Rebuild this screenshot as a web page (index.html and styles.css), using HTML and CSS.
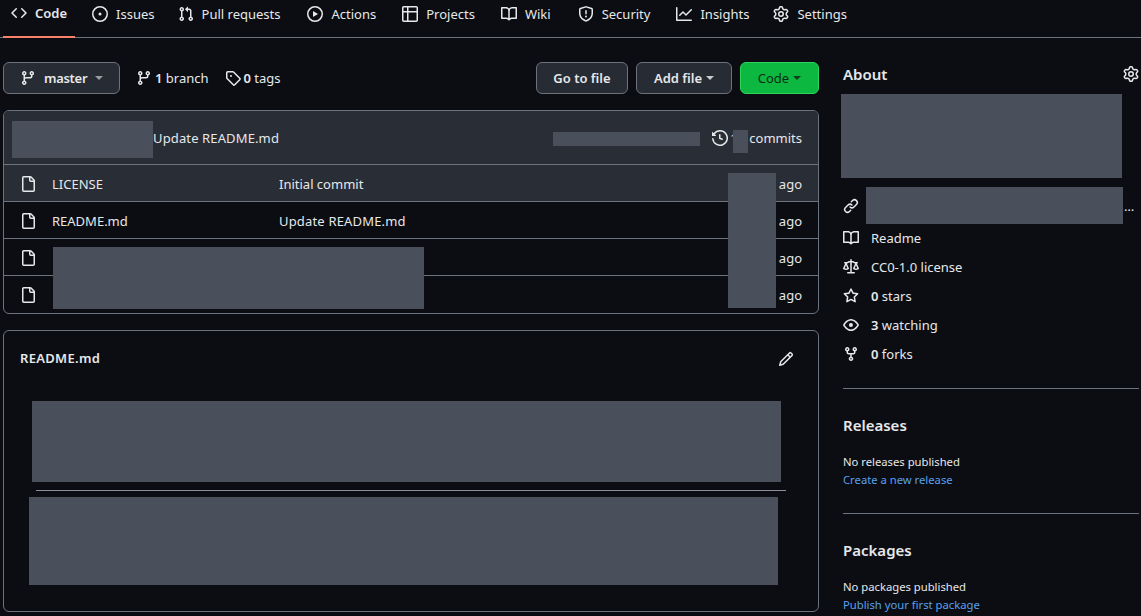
FILE: index.html
```html
<!DOCTYPE html>
<html lang="en">
<head>
<meta charset="utf-8">
<title>Repository</title>
<link rel="stylesheet" href="styles.css">
</head>
<body>
<svg class="sprite" width="0" height="0" aria-hidden="true">
<defs>
<symbol id="i-code" viewBox="0 0 16 16"><path d="M4.72 3.22a.75.75 0 0 1 1.06 1.06L2.06 8l3.72 3.72a.75.75 0 1 1-1.06 1.06L.47 8.53a.75.75 0 0 1 0-1.06Zm6.56 0a.75.75 0 1 0-1.06 1.06L13.94 8l-3.72 3.72a.75.75 0 1 0 1.06 1.06l4.25-4.25a.75.75 0 0 0 0-1.06Z"/></symbol>
<symbol id="i-issue" viewBox="0 0 16 16"><path d="M8 9.5a1.5 1.5 0 1 0 0-3 1.5 1.5 0 0 0 0 3Z"/><path d="M8 0a8 8 0 1 1 0 16A8 8 0 0 1 8 0ZM1.5 8a6.5 6.5 0 1 0 13 0 6.5 6.5 0 0 0-13 0Z"/></symbol>
<symbol id="i-pr" viewBox="0 0 16 16"><path d="M1.5 3.25a2.25 2.25 0 1 1 3 2.122v5.256a2.251 2.251 0 1 1-1.5 0V5.372A2.25 2.25 0 0 1 1.5 3.25Zm5.677-.177L9.573.677A.25.25 0 0 1 10 .854V2.5h1A2.5 2.5 0 0 1 13.5 5v5.628a2.251 2.251 0 1 1-1.5 0V5a1 1 0 0 0-1-1h-1v1.646a.25.25 0 0 1-.427.177L7.177 3.427a.25.25 0 0 1 0-.354ZM3.75 2.5a.75.75 0 1 0 0 1.5.75.75 0 0 0 0-1.5Zm0 9.5a.75.75 0 1 0 0 1.5.75.75 0 0 0 0-1.5Zm8.25.75a.75.75 0 1 0 1.5 0 .75.75 0 0 0-1.5 0Z"/></symbol>
<symbol id="i-play" viewBox="0 0 16 16"><path d="M8 0a8 8 0 1 1 0 16A8 8 0 0 1 8 0ZM1.5 8a6.5 6.5 0 1 0 13 0 6.5 6.5 0 0 0-13 0Zm4.879-2.773 4.264 2.559a.25.25 0 0 1 0 .428l-4.264 2.559A.25.25 0 0 1 6 10.559V5.442a.25.25 0 0 1 .379-.215Z"/></symbol>
<symbol id="i-table" viewBox="0 0 16 16"><path d="M0 1.75C0 .784.784 0 1.75 0h12.5C15.216 0 16 .784 16 1.75v12.5A1.75 1.75 0 0 1 14.25 16H1.75A1.75 1.75 0 0 1 0 14.25ZM6.5 6.5v8h7.75a.25.25 0 0 0 .25-.25V6.5Zm8-1.5V1.75a.25.25 0 0 0-.25-.25H6.5V5Zm-13 1.5v7.75c0 .138.112.25.25.25H5v-8ZM5 5V1.5H1.75a.25.25 0 0 0-.25.25V5Z"/></symbol>
<symbol id="i-book" viewBox="0 0 16 16"><path d="M0 1.75A.75.75 0 0 1 .75 1h4.253c1.227 0 2.317.59 3 1.501A3.743 3.743 0 0 1 11.006 1h4.245a.75.75 0 0 1 .75.75v10.5a.75.75 0 0 1-.75.75h-4.507a2.25 2.25 0 0 0-1.591.659l-.622.621a.75.75 0 0 1-1.06 0l-.622-.621A2.25 2.25 0 0 0 5.258 13H.75a.75.75 0 0 1-.75-.75Zm7.251 10.324.004-5.073-.002-2.253A2.25 2.25 0 0 0 5.003 2.5H1.5v9h3.757a3.75 3.75 0 0 1 1.994.574ZM8.755 4.75l-.004 7.322a3.752 3.752 0 0 1 1.992-.572H14.5v-9h-3.495a2.25 2.25 0 0 0-2.25 2.25Z"/></symbol>
<symbol id="i-shield" viewBox="0 0 16 16"><path d="M7.467.133a1.748 1.748 0 0 1 1.066 0l5.25 1.68A1.75 1.75 0 0 1 15 3.48V7c0 1.566-.32 3.182-1.303 4.682-.983 1.498-2.585 2.813-5.032 3.855a1.697 1.697 0 0 1-1.33 0c-2.447-1.042-4.049-2.357-5.032-3.855C1.32 10.182 1 8.566 1 7V3.48a1.75 1.75 0 0 1 1.217-1.667Zm.61 1.429a.25.25 0 0 0-.153 0l-5.25 1.68a.25.25 0 0 0-.174.238V7c0 1.358.275 2.666 1.057 3.86.784 1.194 2.121 2.34 4.366 3.297a.196.196 0 0 0 .154 0c2.245-.956 3.582-2.104 4.366-3.298C13.225 9.666 13.5 8.36 13.5 7V3.48a.251.251 0 0 0-.174-.237l-5.25-1.68ZM8.75 4.75v3a.75.75 0 0 1-1.5 0v-3a.75.75 0 0 1 1.5 0ZM9 10.5a1 1 0 1 1-2 0 1 1 0 0 1 2 0Z"/></symbol>
<symbol id="i-graph" viewBox="0 0 16 16"><path d="M1.5 1.75V13.5h13.75a.75.75 0 0 1 0 1.5H.75a.75.75 0 0 1-.75-.75V1.75a.75.75 0 0 1 1.5 0Zm14.28 2.53-5.25 5.25a.75.75 0 0 1-1.06 0L7 7.06 4.28 9.78a.751.751 0 0 1-1.042-.018.751.751 0 0 1-.018-1.042l3.25-3.25a.75.75 0 0 1 1.06 0L10 7.94l4.72-4.72a.751.751 0 0 1 1.042.018.751.751 0 0 1 .018 1.042Z"/></symbol>
<symbol id="i-gear" viewBox="0 0 16 16"><path d="M8 0a8.2 8.2 0 0 1 .701.031C9.444.095 9.99.645 10.16 1.29l.288 1.107c.018.066.079.158.212.224.231.114.454.243.668.386.123.082.233.09.299.071l1.103-.303c.644-.176 1.392.021 1.82.63.27.385.506.792.704 1.218.315.675.111 1.422-.364 1.891l-.814.806c-.049.048-.098.147-.088.294.016.257.016.515 0 .772-.01.147.038.246.088.294l.814.806c.475.469.679 1.216.364 1.891a7.977 7.977 0 0 1-.704 1.217c-.428.61-1.176.807-1.82.63l-1.102-.302c-.067-.019-.177-.011-.3.071a5.909 5.909 0 0 1-.668.386c-.133.066-.194.158-.211.224l-.29 1.106c-.168.646-.715 1.196-1.458 1.26a8.006 8.006 0 0 1-1.402 0c-.743-.064-1.289-.614-1.458-1.26l-.289-1.106c-.018-.066-.079-.158-.212-.224a5.738 5.738 0 0 1-.668-.386c-.123-.082-.233-.09-.299-.071l-1.103.303c-.644.176-1.392-.021-1.82-.63a8.12 8.12 0 0 1-.704-1.218c-.315-.675-.111-1.422.363-1.891l.815-.806c.05-.048.098-.147.088-.294a6.214 6.214 0 0 1 0-.772c.01-.147-.038-.246-.088-.294l-.815-.806C.635 6.045.431 5.298.746 4.623a7.92 7.92 0 0 1 .704-1.217c.428-.61 1.176-.807 1.82-.63l1.102.302c.067.019.177.011.3-.071.214-.143.437-.272.668-.386.133-.066.194-.158.211-.224l.29-1.106C6.009.645 6.556.095 7.299.03 7.53.01 7.764 0 8 0Zm-.571 1.525c-.036.003-.108.036-.137.146l-.289 1.105c-.147.561-.549.967-.998 1.189-.173.086-.34.183-.5.29-.417.278-.97.423-1.529.27l-1.103-.303c-.109-.03-.175.016-.195.045-.22.312-.412.644-.573.99-.014.031-.021.11.059.19l.815.806c.411.406.562.957.53 1.456a4.709 4.709 0 0 0 0 .582c.032.499-.119 1.05-.53 1.456l-.815.806c-.081.08-.073.159-.059.19.162.346.353.677.573.989.02.03.085.076.195.046l1.102-.303c.56-.153 1.113-.008 1.53.27.161.107.328.204.501.29.447.222.85.629.997 1.189l.289 1.105c.029.109.101.143.137.146a6.6 6.6 0 0 0 1.142 0c.036-.003.108-.036.137-.146l.289-1.105c.147-.561.549-.967.998-1.189.173-.086.34-.183.5-.29.417-.278.97-.423 1.529-.27l1.103.303c.109.029.175-.016.195-.045.22-.313.411-.644.573-.99.014-.031.021-.11-.059-.19l-.815-.806c-.411-.406-.562-.957-.53-1.456a4.709 4.709 0 0 0 0-.582c-.032-.499.119-1.05.53-1.456l.815-.806c.081-.08.073-.159.059-.19a6.464 6.464 0 0 0-.573-.989c-.02-.03-.085-.076-.195-.046l-1.102.303c-.56.153-1.113.008-1.53-.27a4.44 4.44 0 0 0-.501-.29c-.447-.222-.85-.629-.997-1.189l-.289-1.105c-.029-.11-.101-.143-.137-.146a6.6 6.6 0 0 0-1.142 0ZM11 8a3 3 0 1 1-6 0 3 3 0 0 1 6 0ZM9.5 8a1.5 1.5 0 1 0-3.001.001A1.5 1.5 0 0 0 9.5 8Z"/></symbol>
<symbol id="i-branch" viewBox="0 0 16 16"><path d="M9.5 3.25a2.25 2.25 0 1 1 3 2.122V6A2.5 2.5 0 0 1 10 8.5H6a1 1 0 0 0-1 1v1.128a2.251 2.251 0 1 1-1.5 0V5.372a2.25 2.25 0 1 1 1.5 0v1.836A2.493 2.493 0 0 1 6 7h4a1 1 0 0 0 1-1v-.628A2.25 2.25 0 0 1 9.5 3.25Zm-6 0a.75.75 0 1 0 1.5 0 .75.75 0 0 0-1.5 0Zm8.25-.75a.75.75 0 1 0 0 1.5.75.75 0 0 0 0-1.5ZM4.25 12a.75.75 0 1 0 0 1.5.75.75 0 0 0 0-1.5Z"/></symbol>
<symbol id="i-tag" viewBox="0 0 16 16"><path d="M1 7.775V2.75C1 1.784 1.784 1 2.75 1h5.025c.464 0 .91.184 1.238.513l6.25 6.25a1.75 1.75 0 0 1 0 2.474l-5.026 5.026a1.75 1.75 0 0 1-2.474 0l-6.25-6.25A1.752 1.752 0 0 1 1 7.775Zm1.5 0c0 .066.026.13.073.177l6.25 6.25a.25.25 0 0 0 .354 0l5.025-5.025a.25.25 0 0 0 0-.354l-6.25-6.25a.25.25 0 0 0-.177-.073H2.75a.25.25 0 0 0-.25.25ZM6 5a1 1 0 1 1 0 2 1 1 0 0 1 0-2Z"/></symbol>
<symbol id="i-history" viewBox="0 0 16 16"><path d="m.427 1.927 1.215 1.215a8.002 8.002 0 1 1-1.6 5.685.75.75 0 1 1 1.493-.154 6.5 6.5 0 1 0 1.18-4.458l1.358 1.358A.25.25 0 0 1 3.896 6H.25A.25.25 0 0 1 0 5.75V2.104a.25.25 0 0 1 .427-.177ZM7.75 4a.75.75 0 0 1 .75.75v2.992l2.028.812a.75.75 0 0 1-.557 1.392l-2.5-1A.751.751 0 0 1 7 8.25v-3.5A.75.75 0 0 1 7.75 4Z"/></symbol>
<symbol id="i-file" viewBox="0 0 16 16"><path d="M2 1.75C2 .784 2.784 0 3.75 0h6.586c.464 0 .909.184 1.237.513l2.914 2.914c.329.328.513.773.513 1.237v9.586A1.75 1.75 0 0 1 13.25 16h-9.5A1.75 1.75 0 0 1 2 14.25Zm1.75-.25a.25.25 0 0 0-.25.25v12.5c0 .138.112.25.25.25h9.5a.25.25 0 0 0 .25-.25V6h-2.75A1.75 1.75 0 0 1 9 4.25V1.5Zm6.75.062V4.25c0 .138.112.25.25.25h2.688l-.011-.013-2.914-2.914-.013-.011Z"/></symbol>
<symbol id="i-link" viewBox="0 0 16 16"><path d="m7.775 3.275 1.25-1.25a3.5 3.5 0 1 1 4.95 4.95l-2.5 2.5a3.5 3.5 0 0 1-4.95 0 .751.751 0 0 1 .018-1.042.751.751 0 0 1 1.042-.018 1.998 1.998 0 0 0 2.83 0l2.5-2.5a2.002 2.002 0 0 0-2.83-2.83l-1.25 1.25a.751.751 0 0 1-1.042-.018.751.751 0 0 1-.018-1.042Zm-4.69 9.64a1.998 1.998 0 0 0 2.83 0l1.25-1.25a.751.751 0 0 1 1.042.018.751.751 0 0 1 .018 1.042l-1.25 1.25a3.5 3.5 0 1 1-4.95-4.95l2.5-2.5a3.5 3.5 0 0 1 4.95 0 .751.751 0 0 1-.018 1.042.751.751 0 0 1-1.042.018 1.998 1.998 0 0 0-2.83 0l-2.5 2.5a1.998 1.998 0 0 0 0 2.83Z"/></symbol>
<symbol id="i-law" viewBox="0 0 16 16"><path d="M8.75.75V2h.985c.304 0 .603.08.867.231l1.29.736c.038.022.08.033.124.033h2.234a.75.75 0 0 1 0 1.5h-.427l2.111 4.692a.75.75 0 0 1-.154.838l-.53-.53.529.531-.001.002-.002.002-.006.006-.006.005-.01.01-.045.04c-.21.176-.441.327-.686.45C14.556 10.78 13.88 11 13 11a4.498 4.498 0 0 1-2.023-.454 3.544 3.544 0 0 1-.686-.45l-.045-.04-.016-.015-.006-.006-.004-.004v-.001a.75.75 0 0 1-.154-.838L12.178 4.5h-.162c-.305 0-.604-.079-.868-.231l-1.29-.736a.245.245 0 0 0-.124-.033H8.75V13h2.5a.75.75 0 0 1 0 1.5h-6.5a.75.75 0 0 1 0-1.5h2.5V3.5h-.984a.245.245 0 0 0-.124.033l-1.289.737c-.265.15-.564.23-.869.23h-.162l2.112 4.692a.75.75 0 0 1-.154.838l-.53-.53.529.531-.001.002-.002.002-.006.006-.016.015-.045.04c-.21.176-.441.327-.686.45C4.556 10.78 3.88 11 3 11a4.498 4.498 0 0 1-2.023-.454 3.544 3.544 0 0 1-.686-.45l-.045-.04-.016-.015-.006-.006-.004-.004v-.001a.75.75 0 0 1-.154-.838L2.178 4.5H1.75a.75.75 0 0 1 0-1.5h2.234a.249.249 0 0 0 .125-.033l1.288-.737c.265-.15.564-.23.869-.23h.984V.75a.75.75 0 0 1 1.5 0Zm2.945 8.477c.285.135.718.273 1.305.273s1.02-.138 1.305-.273L13 6.327Zm-10 0c.285.135.718.273 1.305.273s1.02-.138 1.305-.273L3 6.327Z"/></symbol>
<symbol id="i-star" viewBox="0 0 16 16"><path d="M8 .25a.75.75 0 0 1 .673.418l1.882 3.815 4.21.612a.75.75 0 0 1 .416 1.279l-3.046 2.97.719 4.192a.751.751 0 0 1-1.088.791L8 12.347l-3.766 1.98a.75.75 0 0 1-1.088-.79l.72-4.194L.818 6.374a.75.75 0 0 1 .416-1.28l4.21-.611L7.327.668A.75.75 0 0 1 8 .25Zm0 2.445L6.615 5.5a.75.75 0 0 1-.564.41l-3.097.45 2.24 2.184a.75.75 0 0 1 .216.664l-.528 3.084 2.769-1.456a.75.75 0 0 1 .698 0l2.77 1.456-.53-3.084a.75.75 0 0 1 .216-.664l2.24-2.183-3.096-.45a.75.75 0 0 1-.564-.41L8 2.694Z"/></symbol>
<symbol id="i-eye" viewBox="0 0 16 16"><path d="M8 2c1.981 0 3.671.992 4.933 2.078 1.27 1.091 2.187 2.345 2.637 3.023a1.62 1.62 0 0 1 0 1.798c-.45.678-1.367 1.932-2.637 3.023C11.67 13.008 9.981 14 8 14c-1.981 0-3.671-.992-4.933-2.078C1.797 10.83.88 9.576.43 8.898a1.62 1.62 0 0 1 0-1.798c.45-.677 1.367-1.931 2.637-3.022C4.33 2.992 6.019 2 8 2ZM1.679 7.932a.12.12 0 0 0 0 .136c.411.622 1.241 1.75 2.366 2.717C5.176 11.758 6.527 12.5 8 12.5c1.473 0 2.825-.742 3.955-1.715 1.124-.967 1.954-2.096 2.366-2.717a.12.12 0 0 0 0-.136c-.412-.621-1.242-1.75-2.366-2.717C10.824 4.242 9.473 3.5 8 3.5c-1.473 0-2.825.742-3.955 1.715-1.124.967-1.954 2.096-2.366 2.717ZM8 10a2 2 0 1 1-.001-3.999A2 2 0 0 1 8 10Z"/></symbol>
<symbol id="i-fork" viewBox="0 0 16 16"><path d="M5 5.372v.878c0 .414.336.75.75.75h4.5a.75.75 0 0 0 .75-.75v-.878a2.25 2.25 0 1 1 1.5 0v.878a2.25 2.25 0 0 1-2.25 2.25h-1.5v2.128a2.251 2.251 0 1 1-1.5 0V8.5h-1.5A2.25 2.25 0 0 1 3.5 6.25v-.878a2.25 2.25 0 1 1 1.5 0ZM5 3.25a.75.75 0 1 0-1.5 0 .75.75 0 0 0 1.5 0Zm6.75.75a.75.75 0 1 0 0-1.5.75.75 0 0 0 0 1.5Zm-3 8.75a.75.75 0 1 0-1.5 0 .75.75 0 0 0 1.5 0Z"/></symbol>
<symbol id="i-pencil" viewBox="0 0 16 16"><path d="M11.013 1.427a1.75 1.75 0 0 1 2.474 0l1.086 1.086a1.75 1.75 0 0 1 0 2.474l-8.61 8.61c-.21.21-.47.364-.756.445l-3.251.93a.75.75 0 0 1-.927-.928l.929-3.25c.081-.286.235-.547.445-.758l8.61-8.61Zm.176 4.823L9.75 4.81l-6.286 6.287a.253.253 0 0 0-.064.108l-.558 1.953 1.953-.558a.253.253 0 0 0 .108-.064Zm1.238-3.763a.25.25 0 0 0-.354 0L10.811 3.75l1.439 1.44 1.263-1.263a.25.25 0 0 0 0-.354Z"/></symbol>
</defs>
</svg>

<nav class="tabs">
  <a class="tab tab-active"><svg class="icon"><use href="#i-code"/></svg>Code</a>
  <a class="tab"><svg class="icon"><use href="#i-issue"/></svg>Issues</a>
  <a class="tab"><svg class="icon"><use href="#i-pr"/></svg>Pull requests</a>
  <a class="tab"><svg class="icon"><use href="#i-play"/></svg>Actions</a>
  <a class="tab"><svg class="icon"><use href="#i-table"/></svg>Projects</a>
  <a class="tab"><svg class="icon"><use href="#i-book"/></svg>Wiki</a>
  <a class="tab"><svg class="icon"><use href="#i-shield"/></svg>Security</a>
  <a class="tab"><svg class="icon"><use href="#i-graph"/></svg>Insights</a>
  <a class="tab"><svg class="icon"><use href="#i-gear"/></svg>Settings</a>
</nav>

<main class="layout">
  <section class="content">
    <div class="toolbar">
      <button class="btn btn-branch"><svg class="icon"><use href="#i-branch"/></svg><b>master</b><span class="caret caret-dim"></span></button>
      <a class="meta-link"><svg class="icon"><use href="#i-branch"/></svg><span><b>1</b> branch</span></a>
      <a class="meta-link"><svg class="icon"><use href="#i-tag"/></svg><span><b>0</b> tags</span></a>
      <div class="spacer"></div>
      <button class="btn btn-goto">Go to file</button>
      <button class="btn btn-add">Add file<span class="caret"></span></button>
      <button class="btn btn-green">Code<span class="caret"></span></button>
    </div>

    <div class="files">
      <div class="commit-bar">
        <span class="commit-msg">Update README.md</span>
        <a class="commits"><svg class="icon"><use href="#i-history"/></svg><span class="commits-num">1</span><span class="commits-word">commits</span></a>
      </div>
      <div class="row row-hover"><svg class="icon"><use href="#i-file"/></svg><span class="name">LICENSE</span><span class="msg">Initial commit</span><span class="age">ago</span></div>
      <div class="row"><svg class="icon"><use href="#i-file"/></svg><span class="name">README.md</span><span class="msg msg-wide">Update README.md</span><span class="age">ago</span></div>
      <div class="row"><svg class="icon"><use href="#i-file"/></svg><span class="name"></span><span class="msg"></span><span class="age">ago</span></div>
      <div class="row row-last"><svg class="icon"><use href="#i-file"/></svg><span class="name"></span><span class="msg"></span><span class="age">ago</span></div>
      <div class="mask mask-author"></div>
      <div class="mask mask-sha"></div>
      <div class="mask mask-count"></div>
      <div class="mask mask-ages"></div>
      <div class="mask mask-names"></div>
    </div>

    <article class="readme">
      <header class="readme-head"><strong>README.md</strong><svg class="icon"><use href="#i-pencil"/></svg></header>
      <div class="block block-title"></div>
      <hr class="rule">
      <div class="block block-body"></div>
    </article>
  </section>

  <aside class="side">
    <section class="about">
      <div class="side-head"><h2>About</h2><svg class="icon"><use href="#i-gear"/></svg></div>
      <div class="block about-desc"></div>
      <div class="about-link"><svg class="icon"><use href="#i-link"/></svg><div class="block about-url"></div><span class="dots">…</span></div>
      <ul class="facts">
        <li><svg class="icon"><use href="#i-book"/></svg>Readme</li>
        <li><svg class="icon"><use href="#i-law"/></svg>CC0-1.0 license</li>
        <li><svg class="icon"><use href="#i-star"/></svg><span><b>0</b> stars</span></li>
        <li><svg class="icon"><use href="#i-eye"/></svg><span><b>3</b> watching</span></li>
        <li><svg class="icon"><use href="#i-fork"/></svg><span><b>0</b> forks</span></li>
      </ul>
    </section>
    <section class="panel">
      <h2>Releases</h2>
      <p>No releases published</p>
      <a class="link">Create a new release</a>
    </section>
    <section class="panel">
      <h2>Packages</h2>
      <p>No packages published</p>
      <a class="link">Publish your first package</a>
    </section>
  </aside>
</main>
</body>
</html>
```

FILE: styles.css
```css
* { box-sizing: border-box; }
html, body { height: 100%; }
body {
  margin: 0;
  overflow: hidden;
  background: #0b0d12;
  color: #e6e8ea;
  font-family: "Noto Sans", "Open Sans", sans-serif;
  font-size: 13px;
  line-height: 18px;
}
.sprite { position: absolute; }
.icon { width: 16px; height: 16px; fill: currentColor; flex: none; display: block; }
b, strong { font-weight: 600; }
h2 { margin: 0; font-size: 15px; font-weight: 600; line-height: 20px; }
p { margin: 0; }
ul { margin: 0; padding: 0; list-style: none; }

.tabs {
  height: 38px;
  display: flex;
  gap: 9px;
  padding-left: 3px;
  border-bottom: 1px solid #6d737d;
}
.tab {
  height: 38px;
  padding: 0 8px 10px;
  display: flex;
  align-items: center;
  gap: 8px;
  white-space: nowrap;
}
.tab:nth-child(3) { margin-left: -2px; }
.tab:nth-child(4) { margin-left: 2px; }
.tab:nth-child(5) { margin-left: 1px; }
.tab:nth-child(6) { margin-left: 1px; }
.tab:nth-child(7) { margin-left: 2px; }
.tab:nth-child(8) { margin-left: 1px; }
.tab:nth-child(9) { margin-left: -1px; }
.tab-active { font-weight: 600; border-bottom: 2px solid #f78166; }

.layout {
  display: grid;
  grid-template-columns: 816px 296px;
  gap: 24px;
  padding: 24px 0 0 3px;
}

.toolbar { display: flex; align-items: center; height: 32px; margin-bottom: 16px; }
.spacer { flex: 1; }
.btn {
  height: 32px;
  display: flex;
  align-items: center;
  justify-content: center;
  background: #272b33;
  color: #e6e8ea;
  border: 1px solid #6d737d;
  border-radius: 6px;
  font: 600 13px/18px "Noto Sans", "Open Sans", sans-serif;
  padding: 0;
}
.btn-branch { width: 117px; gap: 8px; font-weight: 400; justify-content: flex-start; padding-left: 16px; }
.btn-branch b { letter-spacing: -.3px; }
.btn-goto { width: 92px; margin-right: 8px; }
.btn-add { width: 96px; margin-right: 8px; gap: 4px; }
.btn-green { width: 79px; gap: 4px; background: #0cb83f; border-color: #2dd45e; color: #0c2a18; font-weight: 400; }
.caret { width: 0; height: 0; border: 4px solid transparent; border-top-color: currentColor; border-bottom-width: 0; opacity: .85; }
.caret-dim { opacity: .6; }
.meta-link { display: flex; align-items: center; gap: 3px; margin-left: 16px; white-space: nowrap; }

.files {
  position: relative;
  border: 1px solid #6d737d;
  border-radius: 6px;
  overflow: hidden;
  margin-bottom: 16px;
}
.commit-bar {
  height: 53px;
  display: flex;
  align-items: center;
  padding: 0 16px 0 149px;
  background: #292d36;
}
.commit-msg { flex: 1; letter-spacing: .13px; }
.commits { display: flex; align-items: center; gap: 4px; }
.commits-num { margin-left: -2px; }
.commits-word { margin-left: 7.5px; }
.row {
  height: 37px;
  display: flex;
  align-items: center;
  padding: 1px 16px 0;
  border-top: 1px solid #6d737d;
  color: #e6e8ea;
}
.row-last { height: 38px; }
.row-hover { background: #292d36; }
.name { width: 227px; margin-left: 16px; flex: none; }
.msg { flex: 1; }
.msg-wide { letter-spacing: .17px; }

.mask { position: absolute; background: #4a505b; }
.mask-author { left: 8px; top: 10px; width: 141px; height: 37px; }
.mask-sha { left: 549px; top: 21px; width: 147px; height: 14px; }
.mask-count { left: 729px; top: 19px; width: 15px; height: 23px; }
.mask-ages { left: 724px; top: 62px; width: 48px; height: 135px; }
.mask-names { left: 49px; top: 136px; width: 371px; height: 62px; }

.readme {
  height: 282px;
  border: 1px solid #6d737d;
  border-radius: 6px;
}
.readme-head {
  height: 54px;
  display: flex;
  align-items: center;
  justify-content: space-between;
  padding: 0 24px 0 16px;
}
.readme-head strong { letter-spacing: .3px; }
.readme-head .icon { margin-top: 2px; }
.block { background: #4a505b; }
.block-title { width: 749px; height: 81px; margin: 16px 0 0 28px; }
.rule { width: 750px; height: 1px; margin: 8px 0 6px 32px; border: 0; background: #8b9098; }
.block-body { width: 749px; height: 88px; margin-left: 25px; }

.side { display: flex; flex-direction: column; }
.about { padding-bottom: 20px; border-bottom: 1px solid #6d737d; }
.side-head { display: flex; align-items: center; justify-content: space-between; height: 24px; margin-bottom: 8px; }
.side-head h2 { padding-bottom: 1px; box-sizing: content-box; }
.about-desc { width: 281px; height: 84px; margin-left: -2px; }
.about-link { display: flex; align-items: center; margin-top: 9px; }
.about-url { width: 257px; height: 37px; margin-left: 7px; }
.dots { margin-left: 1px; }
.facts { margin-top: -1px; }
.facts li { height: 29px; display: flex; align-items: center; gap: 12px; white-space: nowrap; }

.panel { padding: 24px 0; border-bottom: 1px solid #6d737d; font-size: 11.25px; }
.panel:last-child { border-bottom: 0; }
.panel h2 { margin: 2px 0 18px; }
.link { color: #58a0ec; display: block; }
```
